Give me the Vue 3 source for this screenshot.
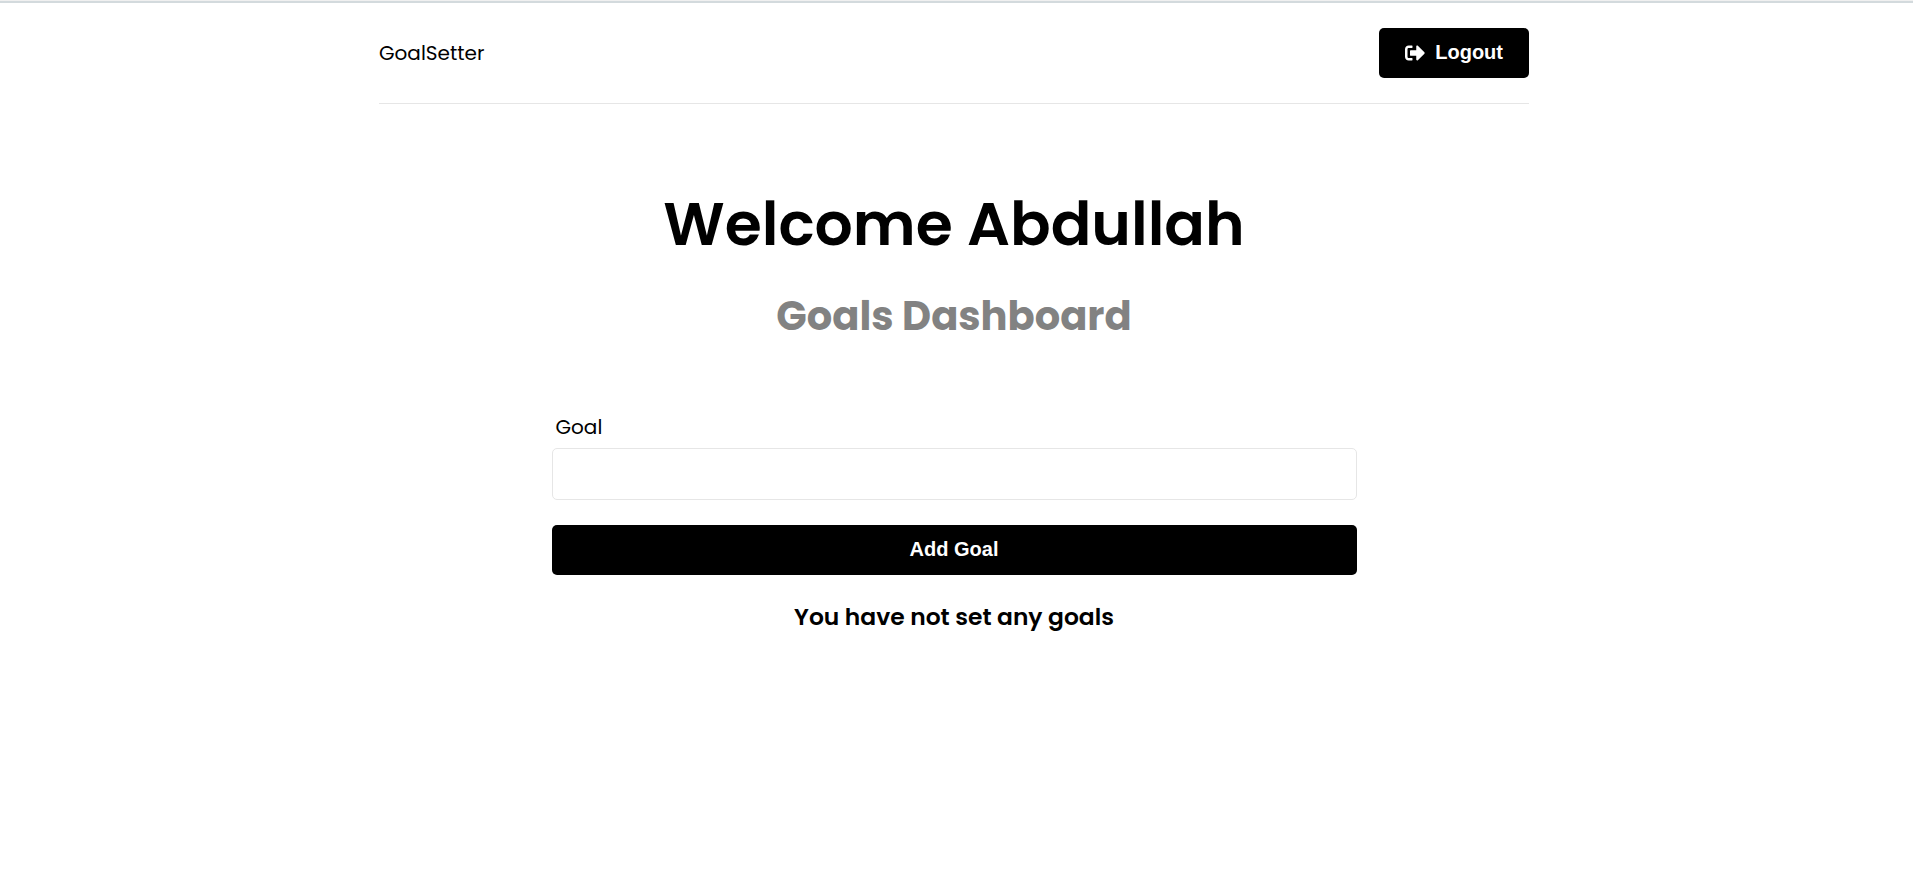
<script setup>
import { ref } from 'vue'

const goal = ref('')
</script>

<template>
  <div class="page">
    <div class="container">
      <header class="header">
        <a class="logo" href="#">GoalSetter</a>
        <button class="btn" type="button">
          <svg class="icon" viewBox="0 0 512 512" aria-hidden="true">
            <path fill="currentColor" d="M497 273L329 441c-15 15-41 4.500-41-17v-96H152c-13.300 0-24-10.700-24-24v-96c0-13.300 10.700-24 24-24h136V88c0-21.400 25.900-32 41-17l168 168c9.300 9.400 9.300 24.600 0 34zM192 436v-40c0-6.600-5.400-12-12-12H96c-17.700 0-32-14.300-32-32V160c0-17.700 14.300-32 32-32h84c6.600 0 12-5.400 12-12V76c0-6.600-5.400-12-12-12H96c-53 0-96 43-96 96v192c0 53 43 96 96 96h84c6.600 0 12-5.400 12-12z" />
          </svg>
          Logout
        </button>
      </header>
      <main>
        <section class="heading">
          <h1>Welcome Abdullah</h1>
          <p>Goals Dashboard</p>
        </section>
        <form class="form" @submit.prevent>
          <label for="goal">Goal</label>
          <input id="goal" v-model="goal" type="text" name="goal" />
          <button class="btn" type="submit">Add Goal</button>
        </form>
        <h3 class="empty">You have not set any goals</h3>
      </main>
    </div>
  </div>
</template>

<style>
body {
  margin: 0;
  background: #fff;
}
</style>

<style scoped>
.page {
  padding-right: 5px;
  color: #000;
  font-family: Poppins, Inter, sans-serif;
  font-size: 20px;
  line-height: 30px;
  border-top: 1px solid #f0f0f0;
}

.page::before {
  content: '';
  display: block;
  height: 2px;
  margin-right: -5px;
  background: #d3dadd;
}

.container {
  max-width: 1150px;
  margin: 0 auto;
}

.header {
  display: flex;
  justify-content: space-between;
  align-items: center;
  padding: 25px 0;
  margin-bottom: 80px;
  border-bottom: 1px solid #e6e6e6;
}

.logo {
  color: #000;
  text-decoration: none;
}

.btn {
  display: flex;
  align-items: center;
  justify-content: center;
  height: 50px;
  padding: 0 26px 2px;
  border: 0;
  border-radius: 5px;
  background: #000;
  color: #fff;
  font-family: "Liberation Sans", Arial, sans-serif;
  font-size: 20px;
  font-weight: 700;
  line-height: 20px;
  cursor: pointer;
}

.icon {
  width: 20px;
  height: 20px;
  margin: 2px 10px 0 0;
}

.heading {
  margin-bottom: 74px;
  text-align: center;
}

h1 {
  margin: 0 0 30px;
  font-size: 60px;
  font-weight: 600;
  line-height: 80px;
}

.heading p {
  margin: 0;
  color: #828282;
  font-size: 40px;
  font-weight: 700;
  line-height: 44px;
}

.form {
  display: flex;
  flex-direction: column;
  width: 70%;
  margin: 0 auto;
}

label {
  margin: 0 0 6px 4px;
}

input {
  box-sizing: border-box;
  height: 52px;
  margin: 0 0 25px;
  padding: 10px;
  border: 1px solid #e6e6e6;
  border-radius: 5px;
  background: #fff;
  font: inherit;
}

.empty {
  margin: 24px 0 0;
  font-weight: 600;
  line-height: 36px;
  text-align: center;
}
</style>
